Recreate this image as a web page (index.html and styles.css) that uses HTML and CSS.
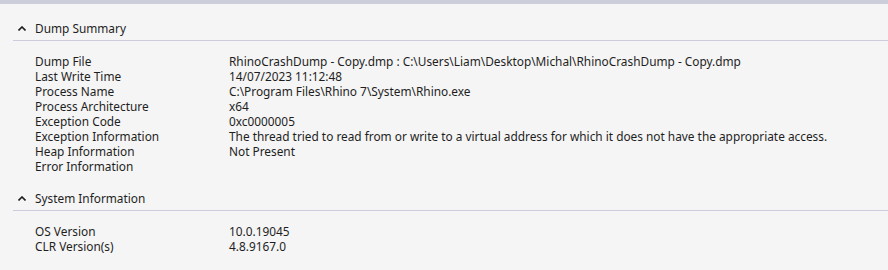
FILE: index.html
```html
<!DOCTYPE html>
<html lang="en">
<head>
    <meta charset="UTF-8">
    <title>Dump Summary</title>
    <link rel="stylesheet" href="styles.css">
</head>
<body>
    <div class="top-bar"></div>

    <div class="section">
        <div class="section-header">
            <svg class="chevron" width="8" height="5" viewBox="0 0 8 5"><path d="M0.5 4.5 L4 1 L7.5 4.5" fill="none" stroke="#1e1e1e" stroke-width="1.6"/></svg>
            <span>Dump Summary</span>
        </div>
        <div class="rows">
            <div class="row"><span class="label">Dump File</span><span class="value">RhinoCrashDump - Copy.dmp : C:\Users\Liam\Desktop\Michal\RhinoCrashDump - Copy.dmp</span></div>
            <div class="row"><span class="label">Last Write Time</span><span class="value">14/07/2023 11:12:48</span></div>
            <div class="row"><span class="label">Process Name</span><span class="value">C:\Program Files\Rhino 7\System\Rhino.exe</span></div>
            <div class="row"><span class="label">Process Architecture</span><span class="value">x64</span></div>
            <div class="row"><span class="label">Exception Code</span><span class="value">0xc0000005</span></div>
            <div class="row"><span class="label">Exception Information</span><span class="value">The thread tried to read from or write to a virtual address for which it does not have the appropriate access.</span></div>
            <div class="row"><span class="label">Heap Information</span><span class="value">Not Present</span></div>
            <div class="row"><span class="label">Error Information</span><span class="value"></span></div>
        </div>
    </div>

    <div class="section">
        <div class="section-header">
            <svg class="chevron" width="8" height="5" viewBox="0 0 8 5"><path d="M0.5 4.5 L4 1 L7.5 4.5" fill="none" stroke="#1e1e1e" stroke-width="1.6"/></svg>
            <span>System Information</span>
        </div>
        <div class="rows">
            <div class="row"><span class="label">OS Version</span><span class="value">10.0.19045</span></div>
            <div class="row"><span class="label">CLR Version(s)</span><span class="value">4.8.9167.0</span></div>
        </div>
    </div>
</body>
</html>
```

FILE: styles.css
```css
body {
    margin: 0;
    background-color: #f5f5f5;
    color: #1e1e1e;
    font-family: "Noto Sans", sans-serif;
    font-size: 11.85px;
}
.top-bar {
    height: 4px;
    background-color: #cccedb;
}
.section-header {
    display: flex;
    align-items: center;
    height: 37px;
    box-sizing: border-box;
    padding-top: 13px;
    margin-left: 13px;
    border-bottom: 1px solid #ccccdd;
    line-height: 15px;
}
.chevron {
    margin-left: 5px;
    margin-right: 9px;
}
.rows {
    padding: 13px 0 0 35px;
}
.row {
    display: flex;
    height: 15px;
    line-height: 15px;
    white-space: nowrap;
}
.label {
    width: 194px;
    flex-shrink: 0;
}
```
